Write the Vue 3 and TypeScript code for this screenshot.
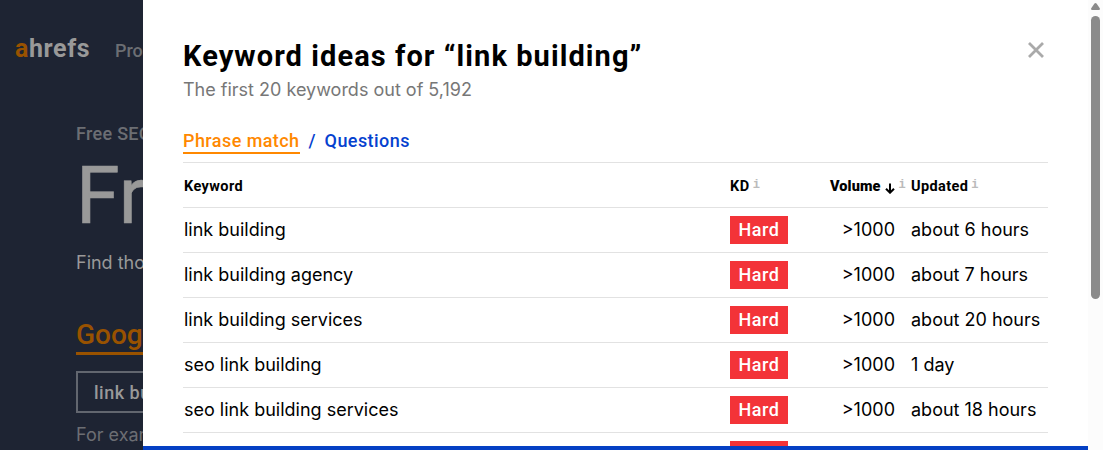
<script setup lang="ts">
import { ref } from 'vue'

interface KeywordIdea {
  keyword: string
  difficulty: string
  volume: string
  updated: string
}

const activeTab = ref<'phrase' | 'questions'>('phrase')

const ideas: KeywordIdea[] = [
  { keyword: 'link building', difficulty: 'Hard', volume: '>1000', updated: 'about 6 hours' },
  { keyword: 'link building agency', difficulty: 'Hard', volume: '>1000', updated: 'about 7 hours' },
  { keyword: 'link building services', difficulty: 'Hard', volume: '>1000', updated: 'about 20 hours' },
  { keyword: 'seo link building', difficulty: 'Hard', volume: '>1000', updated: '1 day' },
  { keyword: 'seo link building services', difficulty: 'Hard', volume: '>1000', updated: 'about 18 hours' },
  { keyword: '', difficulty: '', volume: '', updated: '' },
]
</script>

<template>
  <div class="screen">
    <div class="page">
      <header class="topbar">
        <div class="logo"><span class="logo-a">a</span>hrefs</div>
        <span class="nav-item">Pro</span>
      </header>
      <div class="hero">
        <p class="eyebrow">Free SEO</p>
        <h1 class="hero-title">Fr</h1>
        <p class="lead">Find tho</p>
        <div class="engine">Goog</div>
        <div class="search">link bu</div>
        <p class="example">For exam</p>
      </div>
    </div>

    <main class="modal">
      <div class="heading">
        <h2>Keyword ideas for “link building”</h2>
        <button class="close" aria-label="Close">
          <svg width="18" height="18" viewBox="0 0 18 18">
            <path d="M2 2L16 16M16 2L2 16" />
          </svg>
        </button>
      </div>
      <p class="subtitle">The first 20 keywords out of 5,192</p>

      <nav class="tabs">
        <a class="tab" :class="{ active: activeTab === 'phrase' }" @click="activeTab = 'phrase'">Phrase match</a>
        <span class="slash">/</span>
        <a class="tab" :class="{ active: activeTab === 'questions' }" @click="activeTab = 'questions'">Questions</a>
      </nav>

      <div class="table">
        <div class="row head">
          <span class="th-keyword">Keyword</span>
          <span class="th-kd">KD<i class="info">i</i></span>
          <span class="th-volume">
            <b>Volume</b>
            <svg class="arrow" width="10" height="11" viewBox="0 0 10 11">
              <path d="M5 0.5V9.5M1 5.7L5 9.7L9 5.7" />
            </svg>
            <i class="info">i</i>
          </span>
          <span class="th-updated">Updated<i class="info">i</i></span>
        </div>
        <div v-for="(idea, index) in ideas" :key="index" class="row">
          <span class="keyword">{{ idea.keyword }}</span>
          <span class="badge">{{ idea.difficulty }}</span>
          <span class="volume">{{ idea.volume }}</span>
          <span class="updated">{{ idea.updated }}</span>
        </div>
      </div>
      <div class="bottom-bar"></div>
    </main>

    <div class="scrollbar">
      <svg width="9" height="7" viewBox="0 0 9 7">
        <path d="M3.5 0.6Q4.5 -0.4 5.5 0.6L8.8 5.3Q9.2 7 8 7H1Q-0.2 7 0.2 5.3Z" />
      </svg>
      <div class="thumb"></div>
    </div>
  </div>
</template>

<style>
body {
  margin: 0;
  overflow: hidden;
}
</style>

<style scoped>
.screen {
  display: flex;
  width: 1103px;
  height: 450px;
  overflow: hidden;
  background: #fff;
  font-family: Inter, "Liberation Sans", sans-serif;
}

h1,
h2,
p {
  margin: 0;
}

.page {
  flex: none;
  width: 143px;
  height: 450px;
  overflow: hidden;
  background: #1e2433;
  color: #999;
  white-space: nowrap;
}

.topbar {
  display: flex;
  align-items: center;
  height: 60px;
  padding: 20px 0 0 15px;
}

.logo {
  width: 100px;
  padding-bottom: 3px;
  font: 700 25px/30px Roboto, sans-serif;
  letter-spacing: 0.6px;
}

.logo-a {
  color: #995200;
}

.nav-item {
  padding-top: 1px;
  color: #6c6e73;
  font: 500 18px/24px Roboto, sans-serif;
}

.hero {
  padding: 42px 0 0 76px;
}

.eyebrow {
  color: #6c6e73;
  font: 500 18px/24px Roboto, sans-serif;
  letter-spacing: 0.3px;
}

.hero-title {
  padding-top: 6px;
  font: 400 79px/88px Roboto, sans-serif;
  -webkit-text-stroke: 0.6px #999;
}

.lead {
  padding-top: 11px;
  font-size: 18px;
  line-height: 24px;
}

.engine {
  width: 200px;
  margin-top: 43px;
  border-bottom: 3px solid #995200;
  color: #995200;
  font: 500 28px/34px Roboto, sans-serif;
}

.search {
  box-sizing: border-box;
  width: 300px;
  height: 42px;
  margin-top: 16px;
  padding-left: 16px;
  border: 2px solid #62666f;
  font: 500 18px/39px Roboto, sans-serif;
  letter-spacing: 0.5px;
}

.example {
  padding-top: 10px;
  color: #6c6e73;
  font-size: 18px;
  line-height: 24px;
}

.modal {
  display: flex;
  flex: none;
  flex-direction: column;
  box-sizing: border-box;
  width: 945px;
  height: 450px;
  padding: 36px 40px 0;
  overflow: hidden;
}

.heading {
  display: flex;
  flex: none;
  justify-content: space-between;
  height: 40px;
}

h2 {
  padding-top: 1px;
  font: 700 29px/38px Roboto, sans-serif;
  letter-spacing: 1.07px;
  white-space: nowrap;
}

.close {
  width: 18px;
  height: 18px;
  margin: 5px 3px 0 0;
  padding: 0;
  border: 0;
  background: none;
}

.close svg {
  display: block;
  fill: none;
  stroke: #aaa;
  stroke-width: 2.8;
}

.subtitle {
  flex: none;
  height: 54px;
  color: #777;
  font-size: 18px;
  line-height: 28px;
}

.tabs {
  display: flex;
  flex: none;
  align-items: flex-start;
  height: 32px;
  color: #0541cf;
  font: 500 18px/22px Roboto, sans-serif;
}

.tab {
  border-bottom: 2px solid transparent;
  cursor: pointer;
  letter-spacing: 0.43px;
}

.tab.active {
  border-color: #ff8800;
  color: #ff8800;
}

.slash {
  width: 25px;
  text-align: center;
}

.table {
  flex: 1;
  min-height: 0;
  overflow: hidden;
}

.row {
  display: grid;
  grid-template-columns: 547px 84px 81px 153px;
  align-items: center;
  box-sizing: border-box;
  height: 45px;
  border-top: 1px solid #e2e2e2;
  font-size: 18px;
  line-height: 22px;
  white-space: nowrap;
}

.head {
  padding-top: 3px;
  font: 700 14.5px/20px Roboto, sans-serif;
  letter-spacing: 0.4px;
}

.keyword,
.th-keyword {
  padding-left: 1px;
}

.th-kd {
  letter-spacing: 0.6px;
}

.badge {
  width: 58px;
  height: 28px;
  background: #f33338;
  color: #fff;
  font: 500 18px/28px Roboto, sans-serif;
  letter-spacing: 0.6px;
  text-align: center;
}

.volume {
  text-align: right;
}

.updated,
.th-updated {
  padding-left: 16px;
}

.th-volume {
  display: flex;
  align-items: center;
  margin-left: 16px;
  letter-spacing: 0.1px;
}

.arrow {
  flex: none;
  margin: 3px 5px 0 4px;
  fill: none;
  stroke: #000;
  stroke-width: 2;
}

.info {
  margin-left: 3px;
  color: #bbb;
  font: 700 12px/12px "Liberation Mono", monospace;
  letter-spacing: 0;
  vertical-align: 3px;
}

.th-volume .info {
  margin: -3px 0 0 -1px;
}

.bottom-bar {
  flex: none;
  height: 4px;
  margin: 0 -40px;
  background: #0540c4;
}

.scrollbar {
  display: flex;
  flex-direction: column;
  align-items: center;
  box-sizing: border-box;
  width: 15px;
  padding-top: 3px;
  background: #fcfcfc;
}

.scrollbar svg {
  flex: none;
  fill: #8b8b8b;
}

.thumb {
  width: 9px;
  height: 283px;
  margin-top: 6px;
  border-radius: 5px;
  background: #8b8b8b;
}
</style>
